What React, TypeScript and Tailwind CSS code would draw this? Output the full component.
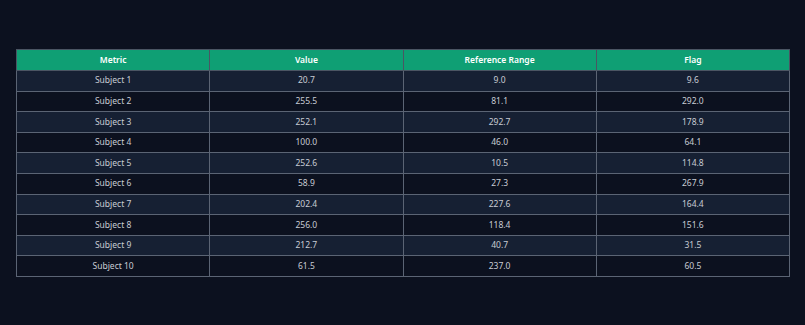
import React from 'react';

const rows: [string, string, string, string][] = [
    ['Subject 1', '20.7', '9.0', '9.6'],
    ['Subject 2', '255.5', '81.1', '292.0'],
    ['Subject 3', '252.1', '292.7', '178.9'],
    ['Subject 4', '100.0', '46.0', '64.1'],
    ['Subject 5', '252.6', '10.5', '114.8'],
    ['Subject 6', '58.9', '27.3', '267.9'],
    ['Subject 7', '202.4', '227.6', '164.4'],
    ['Subject 8', '256.0', '118.4', '151.6'],
    ['Subject 9', '212.7', '40.7', '31.5'],
    ['Subject 10', '61.5', '237.0', '60.5'],
];

const App: React.FC = () => {
    return (
        <div className="min-h-screen w-[805px] h-[325px] bg-[#0c111f] pt-[49px] pl-4 pr-[15px]" style={{ fontFamily: '"Noto Sans", "Open Sans", sans-serif' }}>
            <table className="w-full border-collapse table-fixed text-[8.5px]">
                <thead>
                    <tr className="bg-[#0f9f74] h-[21px]">
                        {['Metric', 'Value', 'Reference Range', 'Flag'].map((h) => (
                            <th key={h} className="border border-[#4b5563] text-white font-semibold text-center p-0">
                                {h}
                            </th>
                        ))}
                    </tr>
                </thead>
                <tbody>
                    {rows.map((r, i) => (
                        <tr key={r[0]} className={`h-[20.6px] ${i % 2 === 0 ? 'bg-[#162033]' : 'bg-[#0c111f]'}`}>
                            {r.map((c, j) => (
                                <td key={j} className="border border-[#5b6474] text-[#c8ccd4] text-center p-0">
                                    {c}
                                </td>
                            ))}
                        </tr>
                    ))}
                </tbody>
            </table>
        </div>
    );
};

export default App;
